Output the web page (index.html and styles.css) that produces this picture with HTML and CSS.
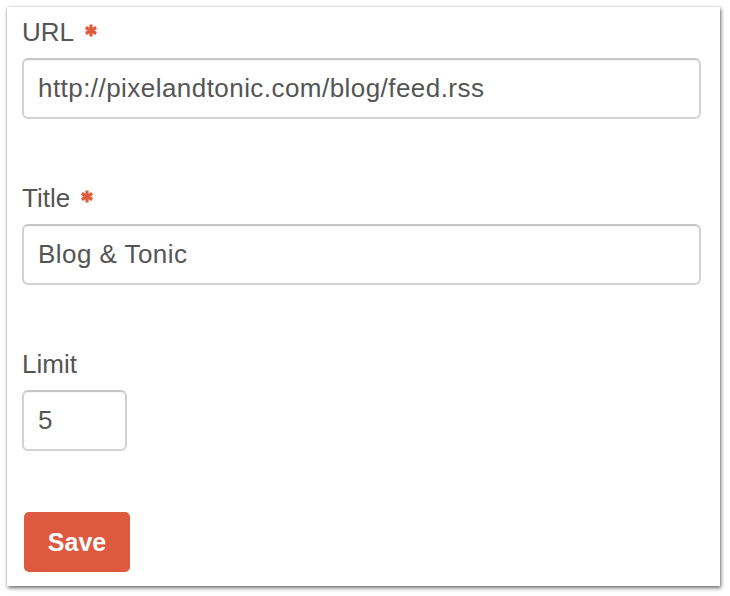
FILE: index.html
```html
<!DOCTYPE html>
<html>
<head>
<meta charset="utf-8">
<link rel="stylesheet" href="styles.css">
</head>
<body>
<div class="panel">
  <div class="field">
    <label class="label">URL <svg class="req" viewBox="0 0 12 13" width="12" height="13"><g stroke="#e05a3d" stroke-width="3.2" stroke-linecap="butt"><line x1="6" y1="0.5" x2="6" y2="12.5"/><line x1="0.8" y1="3.5" x2="11.2" y2="9.5"/><line x1="0.8" y1="9.5" x2="11.2" y2="3.5"/></g></svg></label>
    <div class="input wide">http://pixelandtonic.com/blog/feed.rss</div>
  </div>
  <div class="field">
    <label class="label">Title <svg class="req" viewBox="0 0 12 13" width="12" height="13"><g stroke="#e05a3d" stroke-width="3.2" stroke-linecap="butt"><line x1="6" y1="0.5" x2="6" y2="12.5"/><line x1="0.8" y1="3.5" x2="11.2" y2="9.5"/><line x1="0.8" y1="9.5" x2="11.2" y2="3.5"/></g></svg></label>
    <div class="input wide">Blog &amp; Tonic</div>
  </div>
  <div class="field">
    <label class="label">Limit</label>
    <div class="input small">5</div>
  </div>
  <button class="btn">Save</button>
</div>
</body>
</html>
```
FILE: styles.css
```css
html, body {
  margin: 0;
  padding: 0;
  background: #ffffff;
}
body {
  padding: 7px 0 10px 7px;
  font-family: "Liberation Sans", Arial, sans-serif;
  color: #555555;
}
.panel {
  box-sizing: border-box;
  width: 713px;
  height: 579px;
  background: #ffffff;
  padding: 10px 19px 0 15px;
  box-shadow: 1px 2px 4px rgba(0,0,0,0.55), 0 0 2px rgba(0,0,0,0.2);
  display: flex;
  flex-direction: column;
}
.field {
  display: flex;
  flex-direction: column;
  align-items: flex-start;
  margin-bottom: 64px;
}
.field:nth-child(3) {
  margin-bottom: 61px;
}
.label {
  font-size: 26px;
  line-height: 30px;
  height: 30px;
  margin-bottom: 11px;
  display: flex;
  align-items: center;
  gap: 11px;
}
.req {
  margin-top: -3px;
}
.input {
  box-sizing: border-box;
  height: 61px;
  border: 2px solid #d2d2d2;
  border-top-color: #c6c6c6;
  border-radius: 6px;
  padding: 0 14px;
  font-size: 26px;
  letter-spacing: 0.45px;
  line-height: 57px;
  color: #555555;
  box-shadow: inset 0 1px 1px rgba(0,0,0,0.04);
}
.wide {
  width: 679px;
}
.small {
  width: 105px;
}
.btn {
  align-self: flex-start;
  margin-left: 2px;
  width: 106px;
  height: 60px;
  border: 0;
  border-radius: 5px;
  background: #dd5a40;
  color: #ffffff;
  font-family: "Liberation Sans", Arial, sans-serif;
  font-weight: bold;
  font-size: 25px;
  padding: 0;
}
```
